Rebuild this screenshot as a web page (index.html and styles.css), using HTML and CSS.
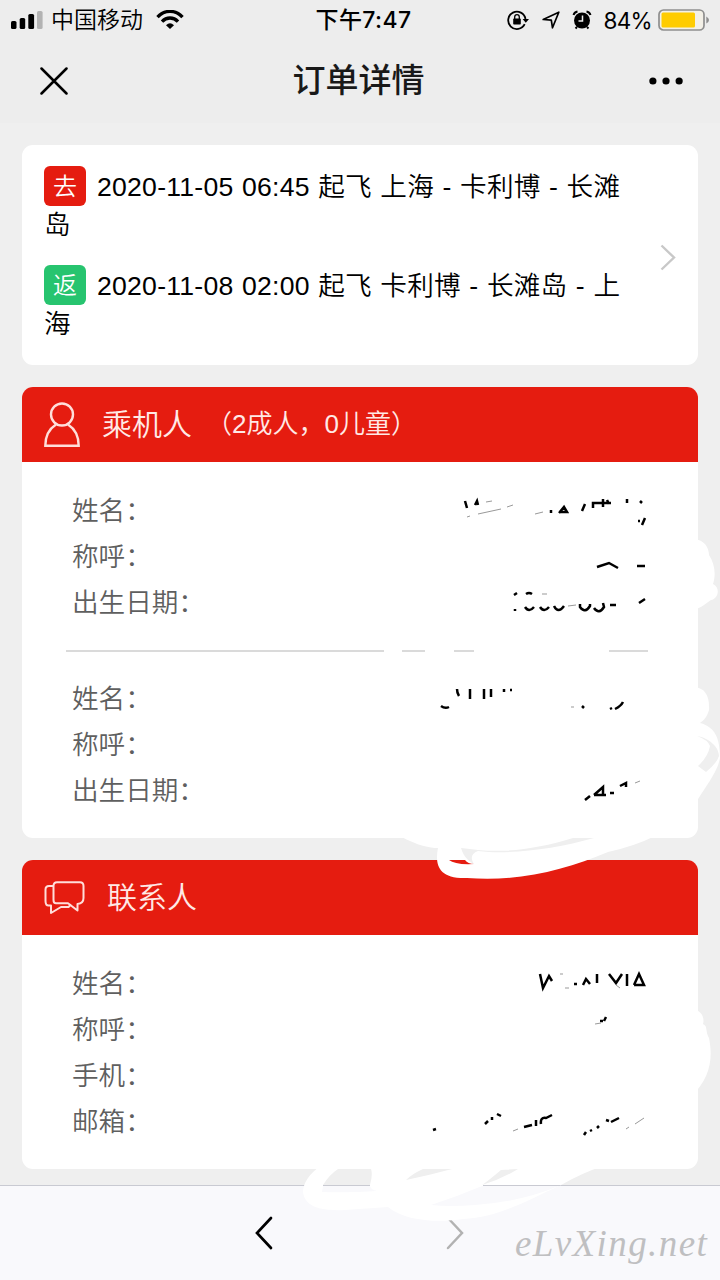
FILE: index.html
```html
<!DOCTYPE html>
<html lang="zh-CN">
<head>
  <meta charset="UTF-8">
  <meta name="viewport" content="width=device-width, initial-scale=1">
  <title>订单详情</title>
  <link rel="stylesheet" href="styles.css">
</head>
<body>

  <!-- 状态栏 -->
  <header class="top">
    <div class="status-bar">
      <div class="status-left">
        <svg class="signal" viewBox="0 0 32 20">
          <rect x="0" y="11" width="5.5" height="8" rx="1.6"/>
          <rect x="8.7" y="8" width="5.5" height="11" rx="1.6"/>
          <rect x="17.3" y="4" width="5.8" height="15" rx="1.6"/>
          <rect x="26" y="1" width="5.6" height="18" rx="1.6" fill="#b3b3b3"/>
        </svg>
        <span class="carrier">中国移动</span>
        <svg class="wifi" viewBox="0 0 28 20" fill="none" stroke="#000" stroke-width="3.3">
          <path d="M1.5 7.2C8.5-.6 19.5-.6 26.5 7.2"/>
          <path d="M6 11.6C10.5 6.8 17.5 6.8 22 11.6"/>
          <path d="M10 15.2Q14 11.5 18 15.2L14 19Z" fill="#000" stroke="none"/>
        </svg>
      </div>
      <span class="clock">下午7:47</span>
      <div class="status-right">
        <svg class="lock" viewBox="0 0 22 20" fill="none" stroke="#000" stroke-width="1.8">
          <path d="M17.7 14.2A8.7 8.7 0 1 1 18.5 9"/>
          <path d="M15.6 9H22L18.8 12.8Z" fill="#000" stroke="none"/>
          <rect x="6.2" y="8.6" width="7.6" height="6" rx=".8" fill="#000" stroke="none"/>
          <path d="M7.7 9V7a2.3 2.3 0 0 1 4.6 0V9" stroke-width="1.3"/>
        </svg>
        <svg class="arrow" viewBox="0 0 18 18" fill="none" stroke="#000" stroke-width="1.7" stroke-linejoin="round">
          <path d="M1.2 8.5L16.8 1.2L10.5 16.8L9.3 9.2Z"/>
        </svg>
        <svg class="alarm" viewBox="0 0 20 20">
          <circle cx="10" cy="10.5" r="8"/>
          <path d="M1.5 5Q2.5 2 5.5 1.5M14.5 1.5Q17.5 2 18.5 5" fill="none" stroke="#000" stroke-width="2"/>
          <path d="M10.5 5.5V11H6.5" fill="none" stroke="#ededed" stroke-width="1.5"/>
          <path d="M5 17L3.5 18.5M15 17L16.5 18.5" stroke="#000" stroke-width="2"/>
        </svg>
        <span class="percent">84%</span>
        <svg class="battery" viewBox="0 0 52 22">
          <rect x="1" y="1" width="45" height="20" rx="4.5" fill="#f3f0e7" stroke="#8e8e8e" stroke-width="1.7"/>
          <rect x="3.5" y="3.5" width="33.5" height="15" rx="1.5" fill="#fc0"/>
          <path d="M48.3 7.5Q51 9 51 11T48.3 14.5Z" fill="#8e8e8e"/>
        </svg>
      </div>
    </div>

    <!-- 标题栏 -->
    <div class="nav-bar">
      <svg class="close" viewBox="0 0 28 28" fill="none" stroke="#000" stroke-width="2.5" stroke-linecap="round">
        <path d="M1.5 1.5L26.5 26.5M26.5 1.5L1.5 26.5"/>
      </svg>
      <h1 class="nav-title">订单详情</h1>
      <svg class="more" viewBox="0 0 36 8">
        <circle cx="4" cy="4" r="3.7"/><circle cx="17.5" cy="4" r="3.7"/><circle cx="31" cy="4" r="3.7"/>
      </svg>
    </div>
  </header>

  <main class="content">
    <!-- 航班 -->
    <section class="card trip">
      <div class="flights">
        <p class="flight"><span class="tag tag-go">去</span>2020-11-05 06:45 起飞 上海 - 卡利博 - 长滩岛</p>
        <p class="flight"><span class="tag tag-back">返</span>2020-11-08 02:00 起飞 卡利博 - 长滩岛 - 上海</p>
      </div>
      <svg class="chevron" viewBox="0 0 16 27" fill="none" stroke="#c8c8c8" stroke-width="2.4">
        <path d="M1.5 1.5L14 13.5L1.5 25.5"/>
      </svg>
    </section>

    <!-- 乘机人 -->
    <section class="card">
      <div class="card-head">
        <svg class="icon-person" viewBox="0 0 36 46" fill="none" stroke="#ffdeda" stroke-width="2.4">
          <circle cx="18" cy="12.5" r="11"/>
          <path d="M12 22.5C5 27 1.3 35 1.3 43.8H34.7C34.7 35 31 27 24 22.5"/>
        </svg>
        <h2 class="head-title">乘机人</h2>
        <span class="head-count">（2成人，0儿童）</span>
      </div>
      <div class="card-body">
        <div class="field">姓名：</div>
        <div class="field">称呼：</div>
        <div class="field">出生日期：</div>
        <hr class="divider">
        <div class="field">姓名：</div>
        <div class="field">称呼：</div>
        <div class="field">出生日期：</div>
      </div>
    </section>

    <!-- 联系人 -->
    <section class="card">
      <div class="card-head">
        <svg class="icon-chat" viewBox="0 0 41 34" fill="none" stroke="#ffdeda" stroke-width="2" stroke-linejoin="round">
          <path d="M9.5 5H5Q1.5 5 1.5 8.5V20Q1.5 24.5 4.5 24.5H7V32L17 26H24.5L27 23.5"/>
          <path d="M13 1.3H36Q39.5 1.3 39.5 5V17Q39.5 22.5 33.5 23V29.5L24 22.3H12Q9.5 22.3 9.5 19V5Q9.5 1.3 13 1.3Z"/>
        </svg>
        <h2 class="head-title">联系人</h2>
      </div>
      <div class="card-body">
        <div class="field">姓名：</div>
        <div class="field">称呼：</div>
        <div class="field">手机：</div>
        <div class="field">邮箱：</div>
      </div>
    </section>
  </main>

  <!-- 底部导航 -->
  <footer class="toolbar">
    <svg class="tool-icon back" viewBox="0 0 18 34" fill="none" stroke="#000" stroke-width="2.7" stroke-linecap="round">
      <path d="M16 2L2 17L16 32"/>
    </svg>
    <svg class="tool-icon" viewBox="0 0 18 34" fill="none" stroke="#b2b2b2" stroke-width="2.5" stroke-linecap="round">
      <path d="M2 2L16 17L2 32"/>
    </svg>
    <span class="watermark">eLvXing.net</span>
  </footer>

  <!-- 涂抹遮盖 -->
  <svg class="scribble" viewBox="0 0 720 1280">
    <g fill="#fff">
      <rect x="384" y="648" width="18" height="6"/>
      <rect x="425" y="648" width="29" height="6"/>
      <rect x="474" y="648" width="135" height="6"/>
      <path d="M690 540C702 537 709 546 709 555C715 564 716 575 713 584C721 588 718 599 711 600C704 605 699 609 690 611Z"/>
      <path d="M690 688C704 685 710 695 709 710C707 717 704 720 700 723C716 727 720 740 720 758C717 774 705 786 690 813Z"/>
      <path d="M690 1009C701 1009 705 1017 703 1024C708 1026 705 1031 709 1038C713 1058 711 1078 690 1098Z"/>
      <path d="M400 836C418 846 430 848 438 848C435 863 437 879 467 878C520 882 565 870 608 852Q635 846 655 836Z"/>
      <path d="M321 1166C309 1173 303 1184 303 1192C305 1208 323 1211 345 1210L388 1207C405 1221 437 1223 463 1219C500 1217 528 1200 561 1185Q582 1173 603 1166Z"/>
    </g>
    <path fill="#efefef" d="M697 736C709 738 719 747 719 756Q717 763 706 772L698 766Q708 757 710 746Q708 740 697 736Z"/>
    <path fill="#efefef" d="M461 848C464 858 470 862 474 864Q468 855 478 851C510 855 555 849 594 838H573C540 848 510 853 478 850Z"/>
    <path fill="#e51c10" d="M449 860H465Q468 864 474 864Q455 865 449 860Z"/>
    <path fill="#efefef" d="M338 1169H371Q373 1174 370 1185H323Q329 1175 338 1169ZM423 1169H452Q430 1175 406 1180Q412 1174 423 1169ZM501 1170L518 1169Q500 1180 482 1185Q488 1181 501 1170Z"/>
    <path fill="#f9f9fc" d="M323 1186H370Q371 1190 377 1191Q350 1193 322 1192ZM482 1186H559Q520 1202 475 1205Q450 1207 431 1205Q456 1197 482 1186Z"/>
    <path stroke="#c9cad2" d="M323 1185.5H370M483 1185.5H560" fill="none"/>

    <!-- 未盖住的笔迹 -->
    <g fill="none" stroke="#000" stroke-width="2.5">
      <path d="M465 501L467 508M475 505L477 501L478 505M551 513V510M559 513L564 507L567 512H559M582 511L585 504M593 508V503H611M603 499V507M607 500L609 504M627 503V499M640 501L642 503M638 521H640M642 525L645 518"/>
      <path d="M597 567L609 563L618 568M637 566H645"/>
      <path d="M514 595L517 593M526 594Q529 592 532 594M515 611V609M525 607Q529 613 534 607M540 607Q544 613 549 607M554 606Q558 614 564 606M580 604V607Q585 614 590 606V604M594 608Q599 615 604 607L603 603M610 605H616M639 603L645 599"/>
      <path d="M441 706Q445 709 449 707M457 689Q457 693 459 696M470 689V699M484 689V699M491 689V697M504 689V692M510 690H512M582 706L584 708M610 709L612 708M615 709Q621 706 623 702"/>
      <path d="M585 800L590 796M594 795L603 787V796M594 795H606M610 793H614M620 786L626 783V787"/>
      <path d="M540 974L543 988L549 976L552 981M574 984H577M583 985L586 979L590 984M597 974V983M609 974L616 983L622 974M627 974V986M634 985L639 974L644 985H634M603 1021H600M604 1021L606 1017"/>
      <path d="M433 1130L436 1129M485 1124L488 1121M492 1120V1117M497 1114L501 1116M524 1127L532 1125M536 1126V1120M541 1124Q540 1117 546 1118L552 1115M584 1135L586 1132M590 1131L592 1130M597 1128L599 1126M606 1120L609 1121M611 1122L619 1118"/>
    </g>
    <path fill="none" stroke="#999" stroke-width="1" d="M486 502L492 501M467 517L470 516M478 514L501 509M507 507L513 505M535 514L543 512M568 606L576 605M542 594H547M571 707H574M635 783L640 781M560 974H563M565 988H569M595 1024L601 1023M616 985L620 988M513 1131L518 1129M626 1129L629 1127M635 1124L644 1118"/>
  </svg>

</body>
</html>
```

FILE: styles.css
```css
/* リセット */
*, *::before, *::after { margin:0; padding:0; box-sizing:border-box; }

body {
  width:720px; height:1280px;
  display:flex; flex-direction:column;
  position:relative; overflow:hidden;
  background:#efefef; color:#000;
  font-family:"Liberation Sans","Noto Sans CJK SC",sans-serif;
  font-size:26.6px; font-weight:350;
}
svg { display:block; flex:none; }

/* 顶部 */
.top { height:123px; background:#ededed; }
.status-bar {
  height:40px; padding:0 10px 0 11px;
  display:grid; grid-template-columns:1fr auto 1fr;
  align-items:center;
}
.status-left, .status-right { display:flex; align-items:center; }
.status-right { justify-content:flex-end; }
.signal { width:32px; height:20px; }
.carrier { margin-left:8px; font-size:23px; font-weight:350; line-height:40px; }
.wifi { width:28px; height:20px; margin-left:13px; }
.clock {
  margin-left:6px;
  font-family:Inter,"Noto Sans CJK SC",sans-serif;
  font-size:23px; font-weight:500; line-height:40px; letter-spacing:.4px;
}
.lock { width:22px; height:20px; }
.arrow { width:18px; height:18px; margin-left:13px; }
.alarm { width:20px; height:20px; margin-left:12px; }
.percent {
  margin:0 6px 0 12px;
  font-family:Inter,sans-serif; font-size:22.5px; font-weight:400; letter-spacing:-.7px;
}
.battery { width:52px; height:22px; }

.nav-bar {
  height:82px; padding:0 36px 0 40px;
  display:flex; align-items:center; justify-content:space-between;
}
.close { width:28px; height:28px; }
.nav-title { font-size:33px; font-weight:500; line-height:82px; color:#191919; }
.more { width:35px; height:8px; }

/* 卡片 */
.content {
  flex:1; padding:22px 22px 0;
  display:flex; flex-direction:column; gap:22px;
}
.card { background:#fff; border-radius:11px; overflow:hidden; flex:none; }
.trip {
  height:220px; padding:21px 22px 0;
  display:flex; justify-content:space-between;
}
.flights { width:584px; display:flex; flex-direction:column; gap:23px; }
.flight { line-height:38px; height:76px; letter-spacing:.25px; word-spacing:.8px; }
.tag {
  display:inline-block; width:42px; height:40px;
  margin-right:11px; border-radius:6px; overflow:hidden;
  color:#fff; font-size:24px; line-height:42px; text-align:center;
  vertical-align:-10px;
}
.tag-go { background:#e51c10; }
.tag-back { background:#27c46f; }
.chevron { width:16px; height:27px; margin-top:78px; }

.card-head {
  height:75px; padding:0 22px;
  display:flex; align-items:center;
  background:#e51c10; color:#ffe9e6;
}
.icon-person { width:36px; height:46px; }
.icon-chat { width:41px; height:34px; }
.head-title { margin-left:22px; font-size:30px; font-weight:350; line-height:75px; }
.head-count { margin-left:14px; font-size:26px; line-height:73px; }
.card-body { padding:26px 50px 24px; }
.field { height:46px; line-height:46px; color:#5f5f5f; }
.divider { height:2px; margin:24px 0 24px -6px; border:none; background:#dadada; }

/* 底部导航 */
.toolbar {
  height:95px; padding-left:255px;
  display:flex; align-items:center;
  border-top:1px solid #c9cad2; background:#f9f9fc;
}
.tool-icon { width:18px; height:34px; }
.back { margin-right:173px; }
.watermark {
  margin:20px 0 0 51px;
  font-family:"Liberation Serif",cursive; font-style:italic;
  font-size:37px; font-weight:400; letter-spacing:1.4px; color:#bfbfc1;
}

/* 涂抹層盖在整页之上 */
.scribble { position:absolute; top:0; left:0; width:720px; height:1280px; pointer-events:none; }
```
